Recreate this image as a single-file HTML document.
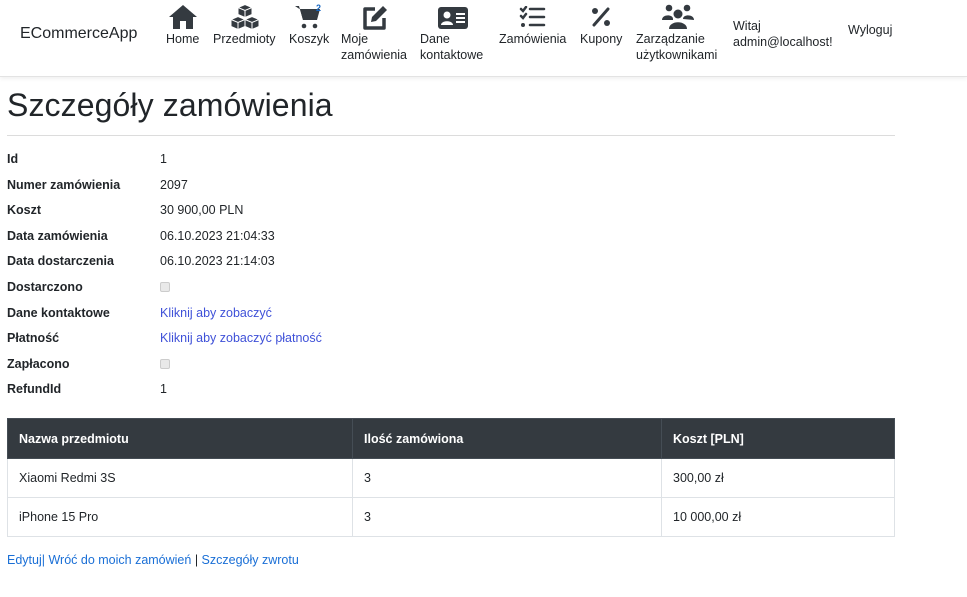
<!DOCTYPE html>
<html><head><meta charset="utf-8"><style>
*{box-sizing:border-box;margin:0;padding:0}
body{width:967px;height:597px;background:#fff;font-family:"Liberation Sans",sans-serif;color:#212529;font-size:13px;position:relative;overflow:hidden}
.nav{position:absolute;left:0;top:0;width:967px;height:77px;border-bottom:1px solid #e3e3e3;box-shadow:0 2px 4px rgba(0,0,0,.06)}
.a{position:absolute;font-size:12.5px;line-height:16px;color:#212529;white-space:nowrap}
.ic{position:absolute}
.lab{position:absolute;font-weight:bold;font-size:12.5px;left:7px}
.val{position:absolute;left:160px;font-size:12.5px}
.lnk{color:#3f51d8}
.cb{width:10px;height:10px;border:1px solid #ccc;background:#e9e9e9;border-radius:2px;display:inline-block}
table{position:absolute;left:7px;top:418px;width:888px;border-collapse:collapse;font-size:12.5px}
th{background:#343a40;color:#fff;text-align:left;height:40px;padding-left:11px;border:1px solid #454d55}
td{height:39px;padding-left:11px;border:1px solid #dee2e6}
</style></head><body>
<div class="nav">
<div class="a" style="left:20px;top:26px;font-size:16px">ECommerceApp</div>
<svg class="ic" style="left:168px;top:4px" width="30" height="26" viewBox="0 0 30 26"><path d="M15 1L1 13h4v12h7v-8h6v8h7V13h4z" fill="#343a40"/></svg>
<div class="a" style="left:166px;top:31px">Home</div>
<svg class="ic" style="left:230px;top:4px" width="30" height="27" viewBox="0 0 30 27"><g fill="#343a40" stroke="#fff" stroke-width="1"><path d="M15 0.5l7 3v7l-7 3-7-3v-7z"/><path d="M8 12.5l7 3v7l-7 3-7-3v-7z"/><path d="M22 12.5l7 3v7l-7 3-7-3v-7z"/></g><g stroke="#fff" stroke-width="1" fill="none"><path d="M8 3.5l7 3 7-3M15 6.5v7M1 15.5l7 3 7-3M8 18.5v7M15 15.5l7 3 7-3M22 18.5v7"/></g></svg>
<div class="a" style="left:213px;top:31px">Przedmioty</div>
<svg class="ic" style="left:294px;top:4px" width="28" height="26" viewBox="0 0 28 26"><path d="M1 2h4l4 14h13l3-10H7" fill="#343a40"/><path d="M6 5h20l-3 11H9z" fill="#343a40"/><circle cx="10" cy="22" r="2.3" fill="#343a40"/><circle cx="21" cy="22" r="2.3" fill="#343a40"/></svg>
<div class="a" style="left:316px;top:0;font-size:9px;color:#1565c0;font-weight:bold">2</div>
<div class="a" style="left:289px;top:31px">Koszyk</div>
<svg class="ic" style="left:361px;top:4px" width="28" height="27" viewBox="0 0 28 27"><path d="M14 5H4v19h19V14" fill="none" stroke="#343a40" stroke-width="3.5" stroke-linejoin="round"/><path d="M22 2l4 4-11 11-5 1 1-5z" fill="#343a40"/></svg>
<div class="a" style="left:341px;top:31px">Moje<br>zamówienia</div>
<svg class="ic" style="left:437px;top:6px" width="32" height="24" viewBox="0 0 32 24"><rect x="1" y="1" width="30" height="22" rx="3" fill="#343a40"/><circle cx="10" cy="9" r="3.5" fill="#fff"/><path d="M4 19c0-5 12-5 12 0z" fill="#fff"/><rect x="19" y="7" width="9" height="2" fill="#fff"/><rect x="19" y="11" width="9" height="2" fill="#fff"/><rect x="19" y="15" width="9" height="2" fill="#fff"/></svg>
<div class="a" style="left:420px;top:31px">Dane<br>kontaktowe</div>
<svg class="ic" style="left:519px;top:6px" width="28" height="22" viewBox="0 0 28 22"><g fill="none" stroke="#343a40" stroke-width="2.5" stroke-linecap="round"><path d="M2 3l2 2 3-4M2 10l2 2 3-4"/><path d="M11 3h14M11 11h14M11 19h14"/></g><circle cx="4" cy="19" r="2" fill="#343a40"/></svg>
<div class="a" style="left:499px;top:31px">Zamówienia</div>
<svg class="ic" style="left:590px;top:6px" width="22" height="22" viewBox="0 0 22 22"><path d="M18 3L4 19" stroke="#343a40" stroke-width="3" stroke-linecap="round"/><circle cx="5" cy="5" r="3" fill="#343a40"/><circle cx="17" cy="17" r="3" fill="#343a40"/></svg>
<div class="a" style="left:580px;top:31px">Kupony</div>
<svg class="ic" style="left:661px;top:4px" width="34" height="26" viewBox="0 0 34 26"><g fill="#343a40"><circle cx="8" cy="4" r="3.3"/><circle cx="26" cy="4" r="3.3"/><circle cx="17" cy="10" r="4.5"/><path d="M1 16c0-6 11-6 11-1v1z"/><path d="M22 15c0-5 11-5 11 1z"/><path d="M8 25c0-9 18-9 18 0z"/></g></svg>
<div class="a" style="left:636px;top:31px">Zarządzanie<br>użytkownikami</div>
<div class="a" style="left:733px;top:18px">Witaj<br>admin@localhost!</div>
<div class="a" style="left:848px;top:22px">Wyloguj</div>
</div>
<div style="position:absolute;left:7px;top:85px;font-size:32px;line-height:40px;letter-spacing:0.1px">Szczegóły zamówienia</div>
<div style="position:absolute;left:7px;top:135px;width:888px;border-top:1px solid #dcdcdc"></div>
<div class="lab" style="top:152px">Id</div><div class="val" style="top:152px">1</div>
<div class="lab" style="top:178px">Numer zamówienia</div><div class="val" style="top:178px">2097</div>
<div class="lab" style="top:203px">Koszt</div><div class="val" style="top:203px">30 900,00 PLN</div>
<div class="lab" style="top:229px">Data zamówienia</div><div class="val" style="top:229px">06.10.2023 21:04:33</div>
<div class="lab" style="top:254px">Data dostarczenia</div><div class="val" style="top:254px">06.10.2023 21:14:03</div>
<div class="lab" style="top:280px">Dostarczono</div><div class="val" style="top:281px"><span class="cb"></span></div>
<div class="lab" style="top:306px">Dane kontaktowe</div><div class="val lnk" style="top:306px">Kliknij aby zobaczyć</div>
<div class="lab" style="top:331px">Płatność</div><div class="val lnk" style="top:331px">Kliknij aby zobaczyć płatność</div>
<div class="lab" style="top:357px">Zapłacono</div><div class="val" style="top:358px"><span class="cb"></span></div>
<div class="lab" style="top:382px">RefundId</div><div class="val" style="top:382px">1</div>
<table>
<tr><th style="width:345px">Nazwa przedmiotu</th><th style="width:309px">Ilość zamówiona</th><th>Koszt [PLN]</th></tr>
<tr><td>Xiaomi Redmi 3S</td><td>3</td><td>300,00 zł</td></tr>
<tr><td>iPhone 15 Pro</td><td>3</td><td>10 000,00 zł</td></tr>
</table>
<div style="position:absolute;left:7px;top:553px;font-size:12.5px;color:#1a6fd6">Edytuj| Wróć do moich zamówień <span style="color:#212529">|</span> Szczegóły zwrotu</div>
</body></html>
